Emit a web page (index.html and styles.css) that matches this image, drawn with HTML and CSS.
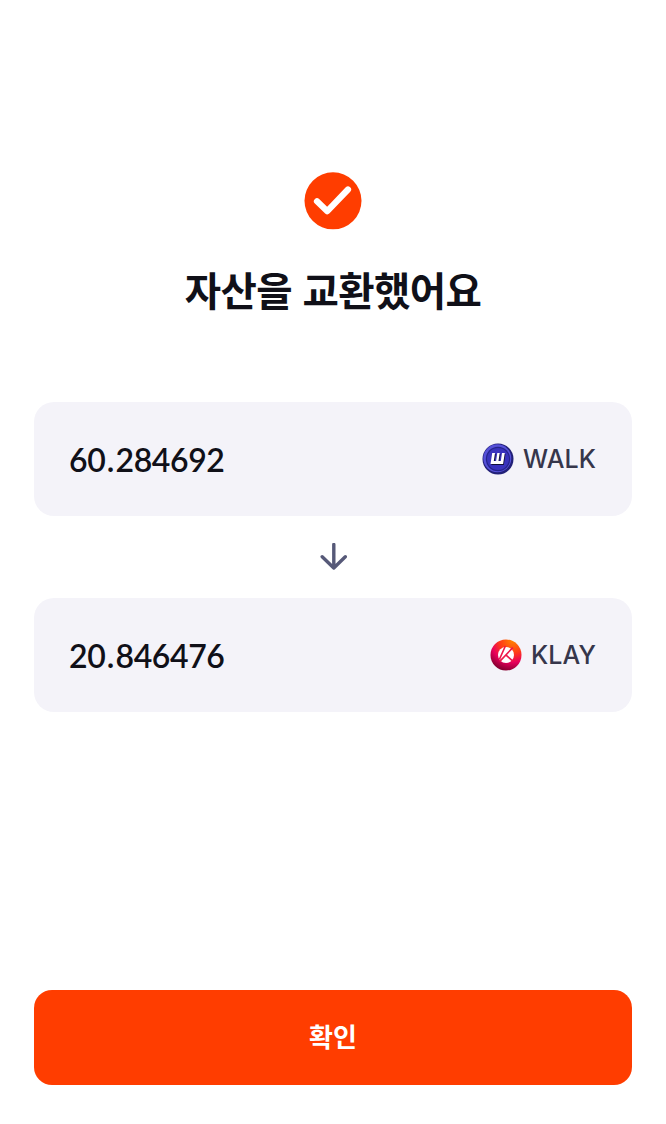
FILE: index.html
```html
<!DOCTYPE html>
<html lang="ko">
<head>
    <meta charset="UTF-8">
    <meta name="viewport" content="width=device-width, initial-scale=1.0">
    <title>자산 교환</title>
    <link rel="stylesheet" href="styles.css">
</head>
<body>
    <main class="page">
        <svg class="check" viewBox="0 0 58 58">
            <circle cx="29" cy="28.8" r="28.5" fill="#ff3d00"/>
            <path d="M13 29.3 L23.3 39.2 L44 17.5" fill="none" stroke="#fff" stroke-width="6.2" stroke-linecap="round" stroke-linejoin="round"/>
        </svg>
        <h1 class="title">자산을 교환했어요</h1>

        <section class="card">
            <span class="amount">60<span class="point">.</span>284692</span>
            <div class="token">
                <svg class="coin" viewBox="0 0 32 32">
                    <circle cx="16" cy="16" r="15.5" fill="#222078"/>
                    <circle cx="15.3" cy="15.3" r="14" fill="#5650d8"/>
                    <circle cx="16" cy="16" r="12.2" fill="#25248c"/>
                    <circle cx="16" cy="16" r="11" fill="#3933bd"/>
                    <path d="M9.3 22 L11 11 H13.8 L12.6 19 H14.8 L16 11 H18.5 L17.3 19 H19.5 L20.7 11 H23.5 L21.8 22 Z" fill="#111039"/>
                    <path d="M8.5 21 L10.2 10 H13 L11.8 18 H14.1 L15.3 10 H17.7 L16.5 18 H18.8 L20 10 H22.8 L21.1 21 Z" fill="#fff"/>
                </svg>
                <span class="symbol">WALK</span>
            </div>
        </section>

        <svg class="arrow" viewBox="0 0 28 28">
            <path d="M14.8 1.5 V25 M3.2 13.8 L14.8 25 L26.3 13.8" fill="none" stroke="#565978" stroke-width="3.4" stroke-linecap="round" stroke-linejoin="round"/>
        </svg>

        <section class="card">
            <span class="amount">20<span class="point">.</span>846476</span>
            <div class="token">
                <svg class="coin" viewBox="0 0 32 32">
                    <defs>
                        <radialGradient id="klay" cx="0.72" cy="0.02" r="1.05">
                            <stop offset="0" stop-color="#ff8500"/>
                            <stop offset="0.4" stop-color="#ff3c18"/>
                            <stop offset="0.68" stop-color="#e8005c"/>
                            <stop offset="1" stop-color="#79002b"/>
                        </radialGradient>
                    </defs>
                    <circle cx="16" cy="16" r="15.5" fill="url(#klay)"/>
                    <circle cx="16" cy="16" r="8" fill="#fff"/>
                    <path d="M15.4 7 L9.4 20.4 M22.8 8.6 L9.8 22.4 M15.8 15.8 L22.8 22.2" fill="none" stroke="#ee174a" stroke-width="1.6"/>
                </svg>
                <span class="symbol">KLAY</span>
            </div>
        </section>

        <button class="confirm" type="button">확인</button>
    </main>
</body>
</html>
```
FILE: styles.css
```css
* {
    box-sizing: border-box;
}

body {
    margin: 0;
    background: #fff;
    color: #101018;
    font-family: "Lato", "Noto Sans CJK KR", sans-serif;
}

.page {
    display: flex;
    flex-direction: column;
    align-items: center;
    height: 1124px;
    padding: 172px 34px 39.5px;
}

.check {
    width: 58px;
    height: 58px;
    flex-shrink: 0;
}

.title {
    margin: 29px 0 83px;
    height: 60px;
    line-height: 60px;
    font-family: "Noto Sans CJK KR", sans-serif;
    font-size: 39.5px;
    font-weight: 700;
    letter-spacing: -0.6px;
    white-space: nowrap;
}

.card {
    display: flex;
    justify-content: space-between;
    align-items: center;
    width: 100%;
    height: 114px;
    padding: 0 36px 0 35px;
    border-radius: 20px;
    background: #f4f3f9;
}

.amount {
    font-size: 32px;
    font-weight: 600;
    letter-spacing: -0.4px;
}

.point {
    margin: 0 1.5px;
}

.token {
    display: flex;
    align-items: center;
    gap: 9px;
}

.coin {
    width: 32px;
    height: 32px;
}

.symbol {
    color: #36364b;
    font-family: "Inter", sans-serif;
    font-size: 25px;
    font-weight: 500;
    letter-spacing: 0.1px;
}

.arrow {
    width: 28px;
    height: 28px;
    margin: 27px 0;
    flex-shrink: 0;
}

.confirm {
    width: 100%;
    height: 95px;
    margin-top: auto;
    padding: 0 0 3px;
    border: none;
    border-radius: 18px;
    background: #ff3d00;
    color: #fff;
    font-family: "Noto Sans CJK KR", sans-serif;
    font-size: 26px;
    font-weight: 600;
}
```
